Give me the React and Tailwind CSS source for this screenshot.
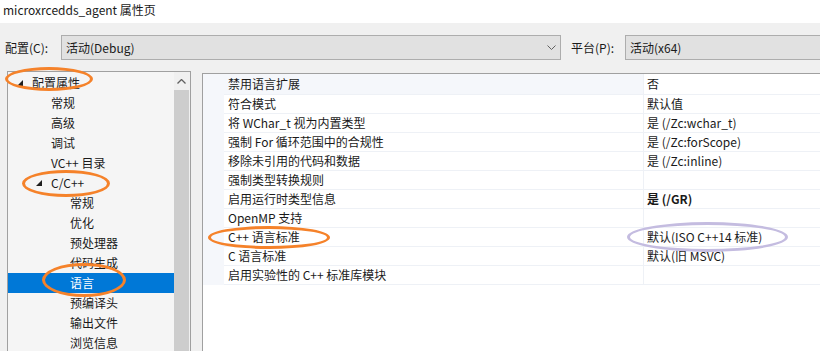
import React from 'react';

const tree = [
  { label: '配置属性', level: 0, open: true },
  { label: '常规', level: 1 },
  { label: '高级', level: 1 },
  { label: '调试', level: 1 },
  { label: 'VC++ 目录', level: 1 },
  { label: 'C/C++', level: 1, open: true },
  { label: '常规', level: 2 },
  { label: '优化', level: 2 },
  { label: '预处理器', level: 2 },
  { label: '代码生成', level: 2 },
  { label: '语言', level: 2, selected: true },
  { label: '预编译头', level: 2 },
  { label: '输出文件', level: 2 },
  { label: '浏览信息', level: 2 },
];

const props = [
  ['禁用语言扩展', '否'],
  ['符合模式', '默认值'],
  ['将 WChar_t 视为内置类型', '是 (/Zc:wchar_t)'],
  ['强制 For 循环范围中的合规性', '是 (/Zc:forScope)'],
  ['移除未引用的代码和数据', '是 (/Zc:inline)'],
  ['强制类型转换规则', ''],
  ['启用运行时类型信息', '是 (/GR)', true],
  ['OpenMP 支持', ''],
  ['C++ 语言标准', '默认(ISO C++14 标准)'],
  ['C 语言标准', '默认(旧 MSVC)'],
  ['启用实验性的 C++ 标准库模块', ''],
];

// indent per tree level
const pad = ['pl-[5px]', 'pl-[24px]', 'pl-[43px]'];

function Chevron() {
  return (
    <svg width="9" height="5" viewBox="0 0 9 5" className="shrink-0">
      <path d="M0.5 0.5 L4.5 4.5 L8.5 0.5" fill="none" stroke="#606060" strokeWidth="1" />
    </svg>
  );
}

function Expander() {
  return (
    <svg width="6" height="6" viewBox="0 0 6 6">
      <polygon points="6,0 6,6 0,6" fill="#1e1e1e" />
    </svg>
  );
}

export default function App() {
  return (
    <div className="relative w-[820px] h-[351px] overflow-hidden bg-[#f0f0f0] text-[12px] text-[#1a1a1a] font-['Segoe_UI','Noto_Sans_CJK_SC',sans-serif]">
      <div className="h-[23px] bg-white pl-[3px] flex items-center pb-[4px]">microxrcedds_agent 属性页</div>

      <div className="mt-[12px] h-[25px] flex items-center">
        <span className="shrink-0 pl-[5px] w-[61px]">配置(C):</span>
        <div className="shrink-0 w-[500px] h-[25px] border border-[#adadad] bg-[#e1e1e1] flex items-center pl-[4px] pr-[4px]">
          <span className="flex-1">活动(Debug)</span>
          <Chevron />
        </div>
        <span className="shrink-0 pl-[10px] w-[64px]">平台(P):</span>
        <div className="shrink-0 w-[210px] h-[25px] border border-[#adadad] bg-[#e1e1e1] flex items-center pl-[4px]">活动(x64)</div>
      </div>

      <div className="mt-[11px] flex items-start">
        <div className="shrink-0 ml-[7px] w-[184px] h-[290px] border border-[#a0a0a0] bg-[#f5f5f5] flex">
          <div className="flex-1 pt-[1px]">
            {tree.map((t, i) => (
              <div
                key={i}
                className={`h-[20px] flex items-center ${pad[t.level]} ${t.selected ? 'bg-[#0078d7] text-white' : ''}`}
              >
                <span className="w-[19px] shrink-0 flex items-center pl-[4px]">{t.open && <Expander />}</span>
                <span>{t.label}</span>
              </div>
            ))}
          </div>
          <div className="w-[16px] bg-[#f0f0f0] flex flex-col">
            <div className="w-[15px] h-[18px] flex items-center justify-center">
              <svg width="9" height="5" viewBox="0 0 9 5">
                <path d="M0.5 4.5 L4.5 0.5 L8.5 4.5" fill="none" stroke="#606060" strokeWidth="1.3" />
              </svg>
            </div>
            <div className="w-[15px] flex-1 bg-[#cdcdcd]" />
          </div>
        </div>

        <div className="ml-[11px] mt-[2px] flex-1 h-[290px] border-l border-t border-[#a0a0a0] bg-white">
          {props.map(([name, value, bold], i) => (
            <div key={i} className={`flex ${i === 0 ? 'h-[21px]' : 'h-[19px]'}`}>
              <div className="w-[21px] shrink-0 bg-[#f5f7fb]" />
              <div className={`w-[419px] shrink-0 flex items-center pl-[4px] border-b border-[#eef1f6] ${i === 0 ? 'bg-[#f5f7fb]' : ''}`}>{name}</div>
              <div className={`flex-1 flex items-center pl-[3px] border-b border-l border-[#eef1f6] ${bold ? 'font-bold' : ''}`}>{value}</div>
            </div>
          ))}
        </div>
      </div>

      <div className="absolute left-[5px] top-[67px] w-[88px] h-[24px] rounded-[50%] border-[3px] border-[#f5822a]" />
      <div className="absolute left-[22px] top-[170px] w-[88px] h-[27px] rounded-[50%] border-[3px] border-[#f5822a]" />
      <div className="absolute left-[42px] top-[263px] w-[84px] h-[34px] rounded-[50%] border-[3px] border-[#f5822a]" />
      <div className="absolute left-[208px] top-[226px] w-[122px] h-[23px] rounded-[50%] border-[3px] border-[#f5822a]" />
      <div className="absolute left-[627px] top-[222px] w-[161px] h-[30px] rounded-[50%] border-[3px] border-[#c4bce0]" />
    </div>
  );
}
